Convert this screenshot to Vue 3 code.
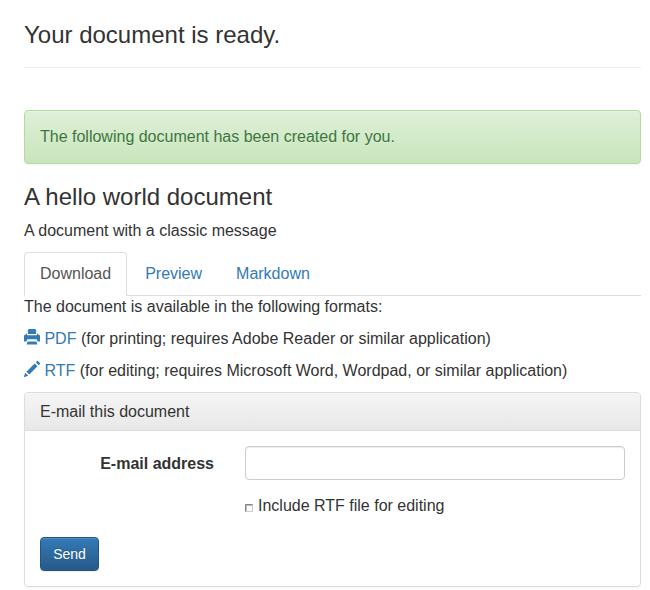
<script setup>
import { ref } from 'vue'

const tabs = ['Download', 'Preview', 'Markdown']
const active = ref('Download')
const email = ref('')
const includeRtf = ref(false)
</script>

<template>
  <main class="page">
    <h3 class="page-title">Your document is ready.</h3>
    <div class="alert">The following document has been created for you.</div>
    <h3 class="doc-title">A hello world document</h3>
    <p class="doc-desc">A document with a classic message</p>

    <ul class="tabs">
      <li v-for="tab in tabs" :key="tab">
        <a class="tab" :class="{ active: tab === active }" @click="active = tab">{{ tab }}</a>
      </li>
    </ul>

    <section class="formats">
      <p>The document is available in the following formats:</p>
      <p>
        <a><svg class="icon" viewBox="0 0 16 16" aria-hidden="true">
          <path d="M4.6 0h6.8l.7 1.2V5H3.9V1.2z" />
          <path d="M0 7Q0 5.4 1.4 5.4H2.2V4.4h.8v1.2q0 .7.7.7h8.6q.7 0 .7-.7V4.4h.8v1H14.6Q16 5.4 16 7V12.6H13.6L12.6 10.2H3.4L2.4 12.6H0z" />
          <path d="M3.5 12.4h9L13.4 15.6H2.6z" />
        </svg> PDF</a> (for printing; requires Adobe Reader or similar application)
      </p>
      <p>
        <a><svg class="icon" viewBox="0 0 1200 1200" aria-hidden="true">
          <g transform="translate(0 1200) scale(1 -1)">
            <path d="M1011 1210q19 0 33 -13l153 -153q13 -14 13 -33t-13 -33l-99 -92l-214 214l95 96q13 14 32 14z" />
            <path d="M1013 800l-615 -614l-214 214l614 614z" />
            <path d="M317 96l-333 -112l110 335z" />
          </g>
        </svg> RTF</a> (for editing; requires Microsoft Word, Wordpad, or similar application)
      </p>
    </section>

    <section class="panel">
      <div class="panel-heading">E-mail this document</div>
      <form class="panel-body" @submit.prevent>
        <div class="field-row">
          <label class="field-label" for="email">E-mail address</label>
          <input id="email" v-model="email" class="field" type="email" />
        </div>
        <label class="check-row">
          <input v-model="includeRtf" class="check" type="checkbox" />
          <span>Include RTF file for editing</span>
        </label>
        <button class="send" type="submit">Send</button>
      </form>
    </section>
  </main>
</template>

<style>
body {
  background: #fff;
}
</style>

<style scoped>
.page,
.page * {
  box-sizing: border-box;
}
.page {
  width: 650px;
  height: 590px;
  padding: 22px 9px 0 24px;
  overflow: hidden;
  font-family: "Liberation Sans", Arial, sans-serif;
  font-size: 16px;
  line-height: 22px;
  color: #333;
}
h3 {
  font-size: 24px;
  font-weight: 400;
  line-height: 26px;
  margin: 0;
}
p {
  margin: 0 0 10px;
}
a {
  color: #337ab7;
  text-decoration: none;
  cursor: pointer;
}
.page-title {
  height: 46px;
  border-bottom: 1px solid #eee;
  margin-bottom: 42px;
}
.alert {
  height: 54px;
  padding: 15px;
  color: #3c763d;
  border: 1px solid #b2dba1;
  border-radius: 4px;
  background: linear-gradient(#dff0d8, #c8e5bc);
  text-shadow: 0 1px 0 rgba(255, 255, 255, 0.2);
  box-shadow: inset 0 1px 0 rgba(255, 255, 255, 0.25), 0 1px 2px rgba(0, 0, 0, 0.05);
}
.doc-title {
  margin: 20px 0 10px;
}
.doc-desc {
  margin-bottom: 10px;
}
.tabs {
  display: flex;
  list-style: none;
  gap: 2px;
  height: 44px;
  margin: 0;
  padding: 0;
  border-bottom: 1px solid #ddd;
}
.tab {
  display: block;
  height: 44px;
  padding: 10px 15px;
  border: 1px solid transparent;
  border-radius: 4px 4px 0 0;
}
.tab.active {
  color: #555;
  background: #fff;
  border-color: #ddd #ddd transparent;
}
.icon {
  display: inline-block;
  width: 16px;
  height: 16px;
  overflow: visible;
  vertical-align: -1px;
  fill: #337ab7;
}
.panel {
  height: 195px;
  border: 1px solid #ddd;
  border-radius: 4px;
  box-shadow: 0 1px 2px rgba(0, 0, 0, 0.05);
}
.panel-heading {
  height: 38px;
  padding: 8px 15px;
  border-bottom: 1px solid #ddd;
  border-radius: 3px 3px 0 0;
  background: linear-gradient(#f5f5f5, #e8e8e8);
}
.panel-body {
  padding: 15px;
}
.field-row {
  display: grid;
  grid-template-columns: 174px 380px;
  column-gap: 31px;
  align-items: center;
}
.field-label {
  padding-top: 2px;
  font-weight: 700;
  text-align: right;
}
.field {
  width: 100%;
  height: 34px;
  padding: 6px 12px;
  font: inherit;
  border: 1px solid #ccc;
  border-radius: 4px;
  background: #fff;
  box-shadow: inset 0 1px 1px rgba(0, 0, 0, 0.075);
}
.check-row {
  display: flex;
  gap: 5px;
  margin: 15px 0 20px 205px;
}
.check {
  appearance: none;
  width: 8px;
  height: 8px;
  margin: 9px 0 0;
  border: 1px solid;
  border-color: #888 #ccc #ccc #888;
  background: #fff;
  box-shadow: inset 1px 1px 0 #bbb;
}
.send {
  display: block;
  width: 59px;
  height: 34px;
  padding: 0;
  color: #fff;
  font-family: inherit;
  font-size: 14px;
  line-height: 20px;
  border: 1px solid #245580;
  border-radius: 4px;
  background: linear-gradient(#337ab7, #265a88);
  text-shadow: 0 -1px 0 rgba(0, 0, 0, 0.2);
  box-shadow: inset 0 1px 0 rgba(255, 255, 255, 0.15), 0 1px 1px rgba(0, 0, 0, 0.075);
}
</style>
